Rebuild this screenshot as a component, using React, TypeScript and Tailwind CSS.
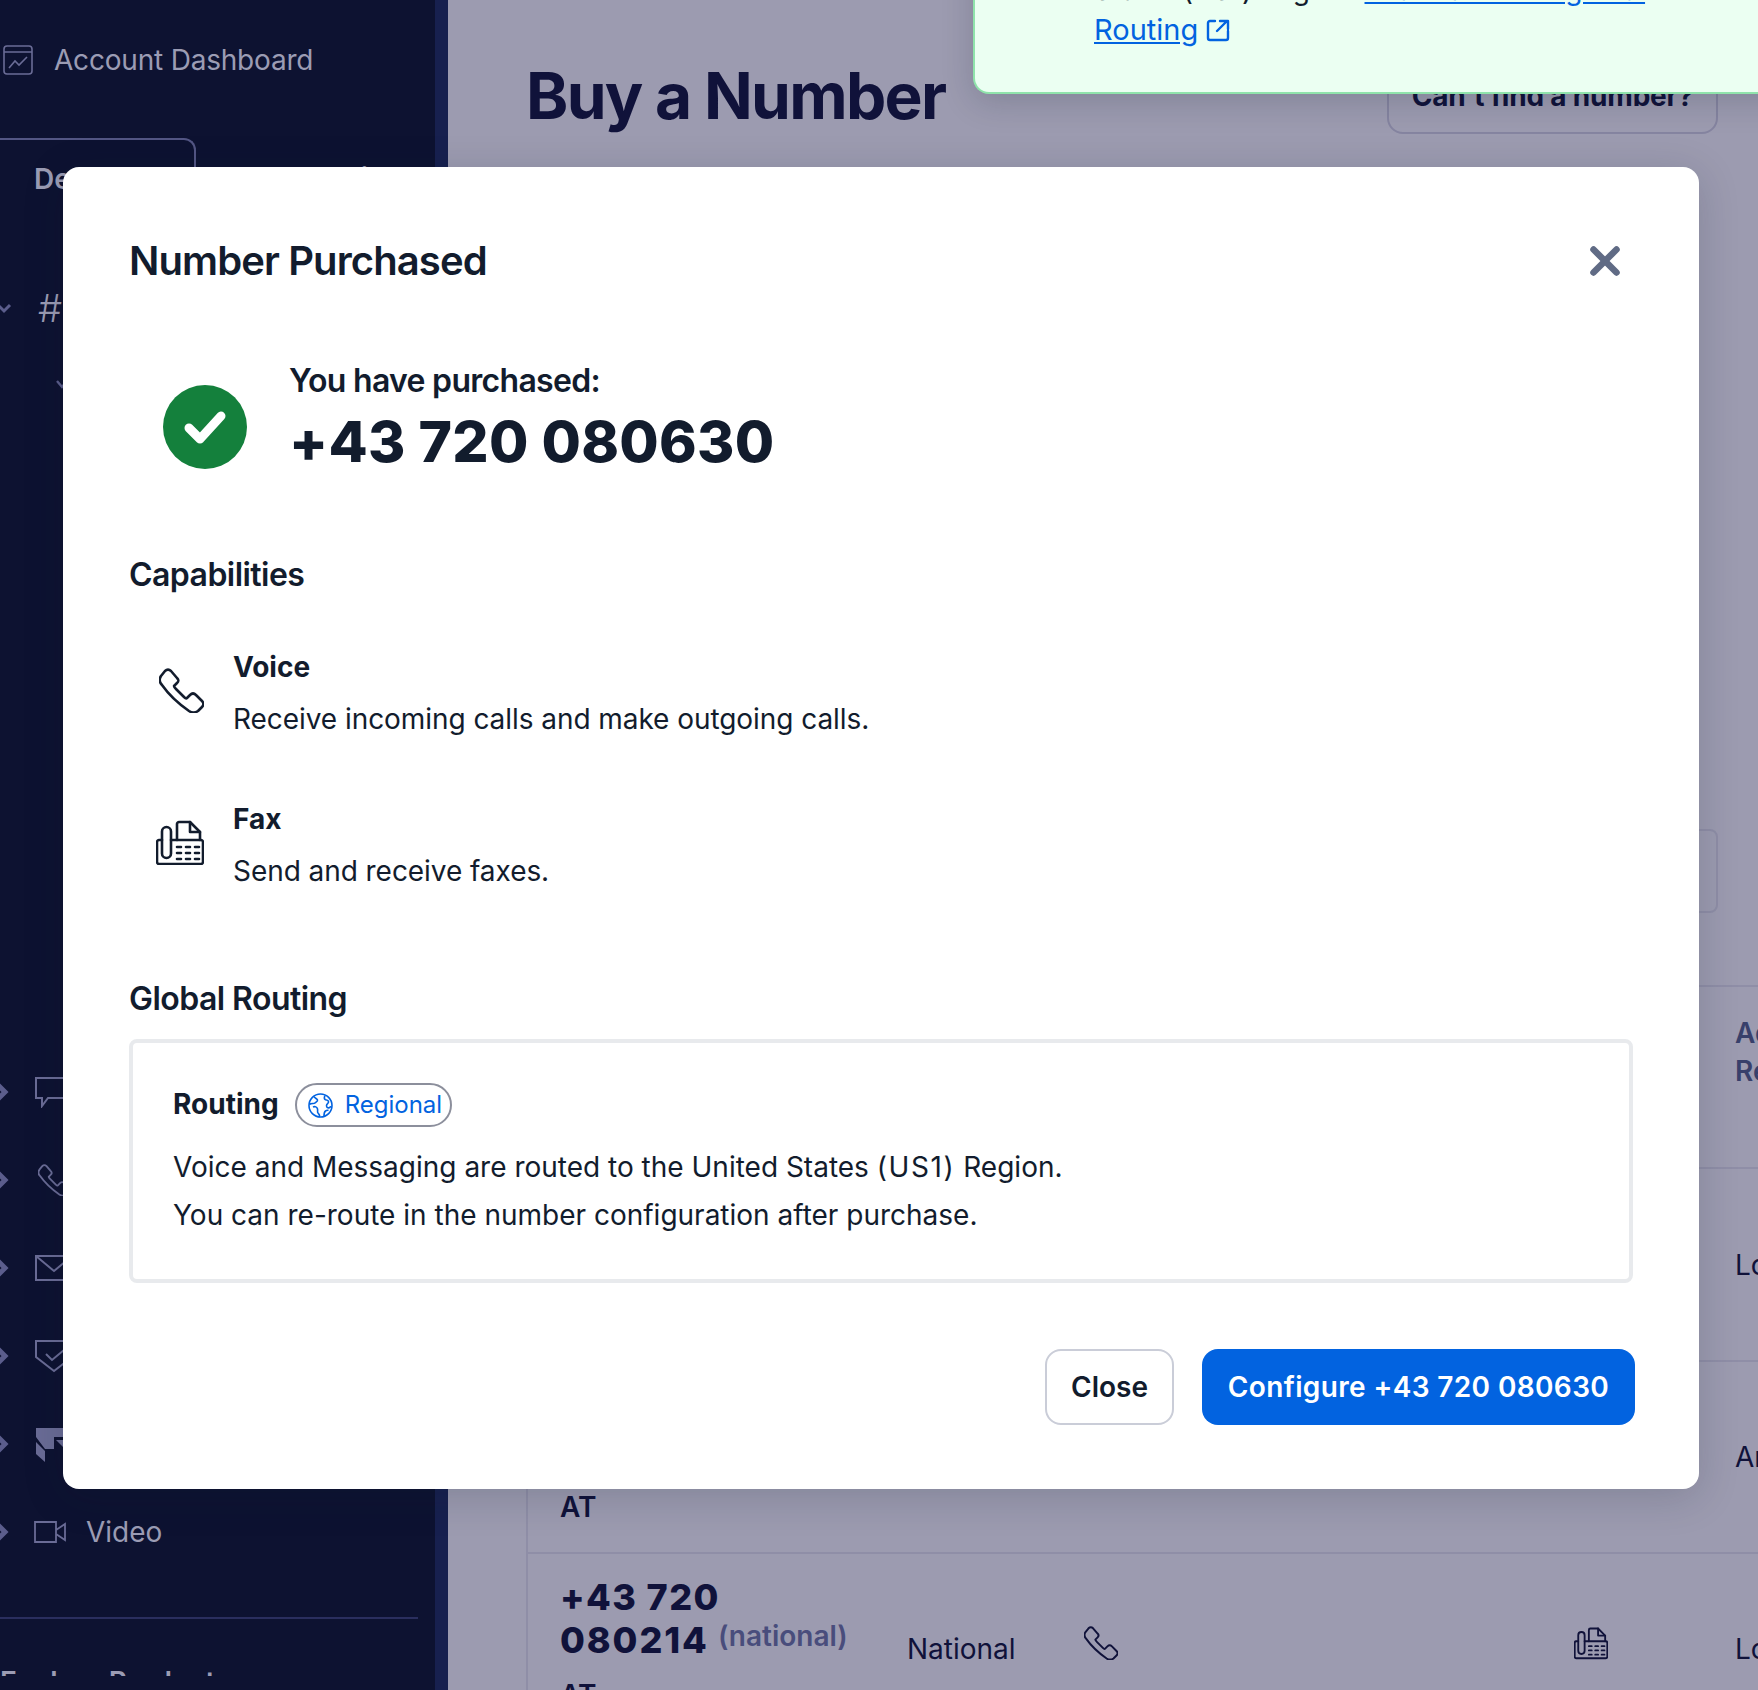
import { X } from "lucide-react"

function PhoneIcon({ className }: { className?: string }) {
  return (
    <svg viewBox="0 0 45 45" fill="none" stroke="currentColor" strokeWidth="2.6" strokeLinejoin="round" className={className}>
      <path d="M3 17C0 14 0 11 2 8l4-5c2-2 4-2 6 0l6 7c2 2 2 3 0 5l-3 3c0 1 1 2 2 3l8 8c1 1 2 2 3 1l3-3c2-2 4-2 6 0l6 6c2 2 2 4 0 6l-4 4c-3 2-6 2-9 0C20 36 10 27 3 17Z" />
    </svg>
  )
}

function FaxIcon({ className }: { className?: string }) {
  return (
    <svg viewBox="0 0 48 45" fill="none" stroke="currentColor" strokeWidth="2.6" strokeLinejoin="round" strokeLinecap="round" className={className}>
      <path d="M6 20H3c-1 0-2 1-2 2v20c0 1 1 2 2 2h42c1 0 2-1 2-2V22c0-1-1-2-2-2H15" />
      <rect x="6" y="7" width="9" height="31" rx="4.5" />
      <path d="M21 20V4c0-1 1-2 2-2h11l10 10v8" />
      <path d="M34 2v10h10" />
      <path d="M21 27h4m5 0h4m5 0h4M21 33h4m5 0h4m5 0h4M21 39h4m5 0h4m5 0h4" />
    </svg>
  )
}

function GlobeIcon({ className }: { className?: string }) {
  return (
    <svg viewBox="0 0 25 25" fill="none" stroke="currentColor" strokeWidth="1.6" strokeLinejoin="round" className={className}>
      <circle cx="12.500" cy="12.500" r="11.500" />
      <path d="M6 3.500c1 2 3 2 3.500 3.500S8 9 7 10s-4 0-5.500 1.500M5 14c2-1 4 0 4.500 2s-.5 3 .5 4 2 3 1 4M17 2.500c-1 2-1 3 0 4s3 0 3.500 2-2 2-2 4 1.500 3 3 2 2-1 2-1M16 23c0-2 0-4 1.500-5s2-1 3-.5" />
    </svg>
  )
}

function ExternalIcon({ className }: { className?: string }) {
  return (
    <svg viewBox="0 0 24 24" fill="none" stroke="currentColor" strokeWidth="2.4" strokeLinecap="round" strokeLinejoin="round" className={className}>
      <path d="M9 3H4c-1 0-2 1-2 2v15c0 1 1 2 2 2h16c1 0 2-1 2-2v-7" />
      <path d="M11 13 21 3m-7 0h8v8" />
    </svg>
  )
}

function CheckCircle() {
  return (
    <svg viewBox="0 0 84 84" className="mt-[28px] h-[84px] w-[84px] shrink-0">
      <circle cx="42" cy="42" r="42" fill="#14803c" />
      <path d="M26 43l11 11 21-23" fill="none" stroke="#fff" strokeWidth="9" strokeLinecap="round" strokeLinejoin="round" />
    </svg>
  )
}

function ChevronRight() {
  return (
    <svg viewBox="0 0 18 24" fill="none" stroke="#5b5d8c" strokeWidth="5" className="h-6 w-[18px] shrink-0">
      <path d="M5 4l8 8-8 8" />
    </svg>
  )
}

const railIcons = [
  // chat
  <svg key="chat" viewBox="0 0 40 32" fill="none" stroke="currentColor" strokeWidth="2" className="h-8 w-10"><path d="M2 2h36v20H14l-6 8v-8H2z" /></svg>,
  // phone
  <PhoneIcon key="phone" className="h-8 w-8" />,
  // mail
  <svg key="mail" viewBox="0 0 40 30" fill="none" stroke="currentColor" strokeWidth="2" className="h-[30px] w-10"><path d="M2 3h36v24H2zM2 3l18 15L38 3" /></svg>,
  // verify
  <svg key="verify" viewBox="0 0 40 34" fill="none" stroke="currentColor" strokeWidth="2" className="h-[34px] w-10"><path d="M2 2h36v16L20 32 2 18z" /><path d="M12 15l6 6 12-10" /></svg>,
  // flex
  <svg key="flex" viewBox="0 0 36 36" fill="currentColor" className="h-9 w-9"><path d="M0 2h36v9H18v12H9L0 11zM0 16l9 9v11l-9-8zM20 14h9l7 8H28z" /></svg>,
]

function Sidebar() {
  return (
    <aside className="h-[1690px] w-[448px] shrink-0 overflow-hidden border-r-[13px] border-[#17204f] bg-[#0d1231] text-[28px] text-[#9b9cb4]">
      <div className="mt-[40px] flex h-10 items-center gap-[20px] pl-0.5">
        <svg viewBox="0 0 32 32" fill="none" stroke="#6a6c96" strokeWidth="1.6" className="h-8 w-8 shrink-0">
          <rect x="2" y="2" width="28" height="28" rx="3" />
          <path d="M2 8h28M7 24l6-7 4 4 8-8" />
        </svg>
        <span className="tracking-[-0.2px]">Account Dashboard</span>
      </div>

      <div className="mt-[58px] flex h-[76px]">
        <div className="flex w-[196px] items-center rounded-tr-xl border-t-2 border-r-2 border-[#535684] pt-1 pl-[34px] font-semibold">Develop</div>
        <div className="flex items-center pt-1 pl-[102px] font-semibold">Admin</div>
      </div>

      <div className="mt-[74px] flex h-10 items-center gap-[26px]">
        <svg viewBox="0 0 12 12" fill="none" stroke="#5b5d8c" strokeWidth="3" className="h-3 w-3 shrink-0">
          <path d="M-2 3l6 6 6-6" />
        </svg>
        <span className="text-[38px] font-light">#</span>
      </div>
      <div className="mt-[50px] ml-[56px]">
        <svg viewBox="0 0 12 12" fill="none" stroke="#5b5d8c" strokeWidth="2.4" className="h-3 w-3">
          <path d="M1 3l5 6 5-6" />
        </svg>
      </div>

      <div className="mt-[658px]">
        {railIcons.map((icon) => (
          <div key={icon.key} className="-ml-2 flex h-[88px] items-center gap-[24px]">
            <ChevronRight />
            <div className="flex w-10 justify-center text-[#6a6c96]">{icon}</div>
          </div>
        ))}
        <div className="-ml-2 flex h-[88px] items-center gap-[24px]">
          <ChevronRight />
          <svg viewBox="0 0 32 24" fill="none" stroke="#6a6c96" strokeWidth="1.8" className="h-6 w-8 shrink-0">
            <path d="M1 2h21v20H1zM22 10l9-6v16l-9-6" />
          </svg>
          <span className="-ml-[4px]">Video</span>
        </div>
      </div>

      <div className="mt-[41px] h-0.5 w-[418px] bg-[#2a2e5e]" />
      <div className="mt-[52px] flex h-[5px] w-[400px] justify-between overflow-hidden leading-[22px] font-semibold">
        <span>Explore Products</span>
        <span>+</span>
      </div>
    </aside>
  )
}

function NumberTable() {
  return (
    <div className="mt-[72px] ml-[78px] w-[1400px] border-l-2 border-[#8f8ea7] text-[28px] text-[#10123a]">
      <div className="grid h-[182px] grid-cols-[380px_175px_491px_161px_1fr] border-t-2 border-[#8f8ea7]">
        <div className="col-start-5 pt-[27px] leading-[38px] font-semibold text-[#38406b]">
          Address
          <br />
          Required
        </div>
      </div>
      <div className="grid h-[193px] grid-cols-[380px_175px_491px_161px_1fr] items-center border-t-2 border-[#8f8ea7]">
        <div className="col-start-5">Local</div>
      </div>
      <div className="grid h-[192px] grid-cols-[380px_175px_491px_161px_1fr] border-t-2 border-[#8f8ea7]">
        <div className="col-start-1 flex flex-col justify-end pb-[24px] pl-[32px] font-semibold">AT</div>
        <div className="col-start-5 pt-[74px]">Any</div>
      </div>
      <div className="grid grid-cols-[380px_175px_491px_161px_1fr] border-t-2 border-[#8f8ea7]">
        <div className="pt-[22px] pl-[32px]">
          <div className="text-[36px] leading-[43px] font-extrabold tracking-[1.4px]">
            +43 720
            <br />
            <span className="tracking-[1.9px]">080214</span> <span className="align-[7px] text-[28px] leading-[20px] font-semibold tracking-normal text-[#494d7c]">(national)</span>
          </div>
          <div className="mt-[12px] leading-[42px] font-semibold">AT</div>
        </div>
        <div className="-ml-px pt-[74px]">National</div>
        <div className="pt-[72px] pl-px"><PhoneIcon className="h-[34px] w-[34px]" /></div>
        <div className="pt-[72px]"><FaxIcon className="h-[34px] w-[34px]" /></div>
        <div className="pt-[74px]">Local</div>
      </div>
    </div>
  )
}

function Capability({ icon, title, text }: { icon: React.ReactNode; title: string; text: string }) {
  return (
    <div className="flex items-center">
      <div className="ml-[27px] flex w-[77px] shrink-0 items-center pb-[9px]">{icon}</div>
      <div>
        <div className="text-[28px] leading-10 font-bold">{title}</div>
        <div className="mt-2 text-[28px] leading-[48px] tracking-[-0.06px]">{text}</div>
      </div>
    </div>
  )
}

function PurchasedModal() {
  return (
    <div className="absolute top-[167px] left-[63px] w-[1636px] rounded-2xl bg-white px-[66px] pt-[65px] pb-[64px] text-[#121c2d] shadow-[0_8px_40px_rgba(18,28,45,0.18)]">
      <div className="flex h-[58px] items-center justify-between">
        <h2 className="text-[40px] leading-[58px] font-semibold tracking-[-0.9px]">Number Purchased</h2>
        <X className="mr-[5px] h-[46px] w-[46px] text-[#606b85]" strokeWidth={3.4} />
      </div>

      <div className="mt-[67px] ml-[34px] flex items-start gap-[42px]">
        <CheckCircle />
        <div>
          <div className="text-[32px] leading-[48px] font-semibold tracking-[-0.7px]">You have purchased:</div>
          <div className="mt-[6px] text-[57px] leading-[62px] font-extrabold tracking-[0.3px]">+43 720 080630</div>
        </div>
      </div>

      <h3 className="mt-[78px] text-[32px] leading-[48px] font-semibold tracking-[-0.55px]">Capabilities</h3>
      <div className="mt-[48px] flex flex-col gap-[56px]">
        <Capability icon={<div className="pl-[3px]"><PhoneIcon className="h-[45px] w-[45px]" /></div>} title="Voice" text="Receive incoming calls and make outgoing calls." />
        <Capability icon={<FaxIcon className="h-[45px] w-[48px]" />} title="Fax" text="Send and receive faxes." />
      </div>

      <h3 className="mt-[80px] text-[32px] leading-[48px] font-semibold tracking-[-0.55px]">Global Routing</h3>
      <div className="mt-[16px] rounded-lg border-4 border-[#e8eaed] px-10 pt-10 pb-10 text-[28px]">
        <div className="flex items-center gap-[16px]">
          <span className="pb-[2px] font-bold">Routing</span>
          <span className="flex h-[44px] w-[157px] items-center gap-[12px] rounded-full border-2 border-[#8c8f9c] pl-[11px] text-[24px] text-[#0263e0]">
            <GlobeIcon className="h-[25px] w-[25px]" />
            Regional
          </span>
        </div>
        <p className="mt-[16px] leading-[48px]">
          Voice and Messaging are routed to the United States <span className="tracking-[1.6px]">(US1)</span> Region.
          <br />
          You can re-route in the number configuration after purchase.
        </p>
      </div>

      <div className="mt-[66px] -mr-0.5 flex justify-end gap-[28px] text-[28px] font-semibold">
        <button className="h-[76px] w-[129px] rounded-2xl border-2 border-[#cacdd8] bg-white">Close</button>
        <button className="h-[76px] w-[433px] rounded-2xl bg-[#0263e0] tracking-[0.37px] text-white">Configure +43 720 080630</button>
      </div>
    </div>
  )
}

export default function App() {
  return (
    <div className="relative flex h-[1690px] w-[1758px] overflow-hidden bg-[#9c9bb0] font-['Inter',sans-serif]">
      <Sidebar />

      <main className="min-w-0 flex-1">
        <div className="flex items-center justify-between pt-[58px] pr-[40px] pl-[78px]">
          <h1 className="text-[64px] leading-[76px] font-bold tracking-[-1.7px] text-[#10123a]">Buy a Number</h1>
          <button className="h-[76px] w-[331px] rounded-2xl border-2 border-[#8584a0] text-[28px] font-bold tracking-[-0.2px] text-[#10123a]">Can't find a number?</button>
        </div>
        <div className="mt-[695px] mr-[40px] ml-auto h-[84px] w-[400px] rounded-lg border-2 border-[#8f8ea7]" />
        <NumberTable />
      </main>

      {/* success banner, page is scrolled so the top runs off screen */}
      <div className="absolute -top-[120px] left-[973px] flex h-[214px] w-[900px] flex-col justify-end rounded-bl-2xl border-b-2 border-l-2 border-[#8fe3ab] bg-[#ebfff2] pb-[42px] pl-[119px] text-[28px] leading-10 text-[#121c2d] shadow-[0_8px_32px_rgba(18,28,45,0.18)]">
        <div className="whitespace-nowrap">
          <span className="tracking-[-0.3px]">States (US1) Region.</span> <a className="text-[#0263e0] underline">Learn about Regional</a>
        </div>
        <div className="flex items-center gap-2">
          <a className="text-[29px] text-[#0263e0] underline">Routing</a>
          <ExternalIcon className="h-6 w-6 text-[#0263e0]" />
        </div>
      </div>

      <PurchasedModal />
    </div>
  )
}
